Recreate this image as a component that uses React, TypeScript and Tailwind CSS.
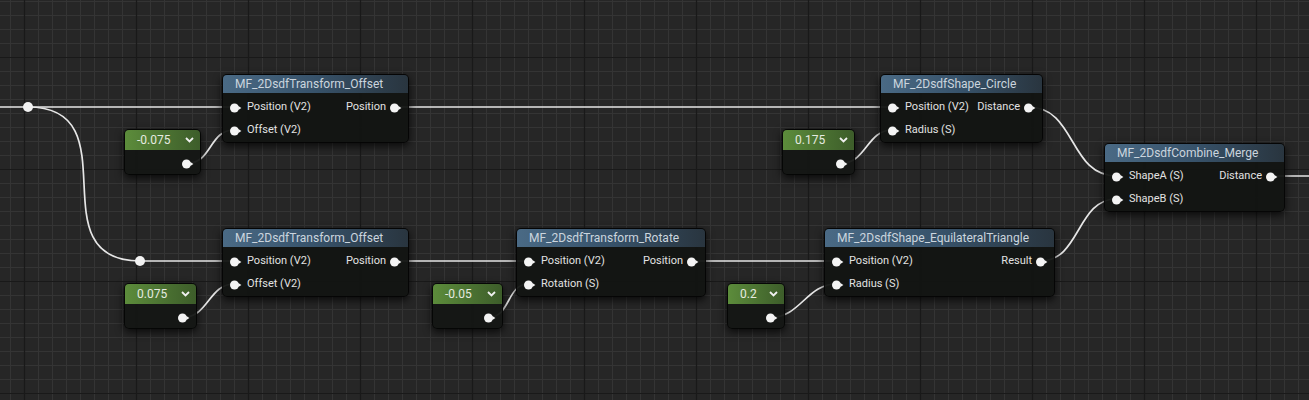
import React from 'react';

type Pt = { x: number; y: number };

interface GraphNode {
  id: string;
  title: string;
  x: number;
  y: number;
  w: number;
  pos: string;
  inputs: string[];
  outputs: string[];
}

interface ConstNode {
  id: string;
  value: string;
  x: number;
  y: number;
  w: number;
  pos: string;
}

// node geometry (numbers are used for the wires, pos classes for the boxes)
const nodes: GraphNode[] = [
  { id: 'off1', title: 'MF_2DsdfTransform_Offset', x: 222, y: 74, w: 187, pos: 'left-[222px] top-[74px] w-[187px]', inputs: ['Position (V2)', 'Offset (V2)'], outputs: ['Position'] },
  { id: 'circle', title: 'MF_2DsdfShape_Circle', x: 880, y: 74, w: 163, pos: 'left-[880px] top-[74px] w-[163px]', inputs: ['Position (V2)', 'Radius (S)'], outputs: ['Distance'] },
  { id: 'merge', title: 'MF_2DsdfCombine_Merge', x: 1104, y: 143, w: 181, pos: 'left-[1104px] top-[143px] w-[181px]', inputs: ['ShapeA (S)', 'ShapeB (S)'], outputs: ['Distance'] },
  { id: 'off2', title: 'MF_2DsdfTransform_Offset', x: 222, y: 228, w: 187, pos: 'left-[222px] top-[228px] w-[187px]', inputs: ['Position (V2)', 'Offset (V2)'], outputs: ['Position'] },
  { id: 'rot', title: 'MF_2DsdfTransform_Rotate', x: 516, y: 228, w: 190, pos: 'left-[516px] top-[228px] w-[190px]', inputs: ['Position (V2)', 'Rotation (S)'], outputs: ['Position'] },
  { id: 'tri', title: 'MF_2DsdfShape_EquilateralTriangle', x: 824, y: 228, w: 231, pos: 'left-[824px] top-[228px] w-[231px]', inputs: ['Position (V2)', 'Radius (S)'], outputs: ['Result'] },
];

const consts: ConstNode[] = [
  { id: 'c1', value: '-0.075', x: 124, y: 129, w: 77, pos: 'left-[124px] top-[129px] w-[77px]' },
  { id: 'c2', value: '0.175', x: 782, y: 129, w: 73, pos: 'left-[782px] top-[129px] w-[73px]' },
  { id: 'c3', value: '0.075', x: 124, y: 283, w: 73, pos: 'left-[124px] top-[283px] w-[73px]' },
  { id: 'c4', value: '-0.05', x: 432, y: 283, w: 71, pos: 'left-[432px] top-[283px] w-[71px]' },
  { id: 'c5', value: '0.2', x: 727, y: 283, w: 58, pos: 'left-[727px] top-[283px] w-[58px]' },
];

const byId = (id: string) => nodes.find((n) => n.id === id)!;
const cById = (id: string) => consts.find((c) => c.id === id)!;

const inPin = (id: string, i: number): Pt => {
  const n = byId(id);
  return { x: n.x + 12.5, y: n.y + 33 + 23 * i };
};
const outPin = (id: string, i: number): Pt => {
  const n = byId(id);
  return { x: n.x + n.w - 14.5, y: n.y + 33 + 23 * i };
};
const cPin = (id: string): Pt => {
  const c = cById(id);
  return { x: c.x + c.w - 14.5, y: c.y + 34.5 };
};

const bez = (a: Pt, b: Pt, d: number) =>
  `M${a.x} ${a.y} C${a.x + d} ${a.y} ${b.x - d} ${b.y} ${b.x} ${b.y}`;

const reroute1: Pt = { x: 28, y: 107 };
const reroute2: Pt = { x: 140, y: 261 };

const wires: string[] = [
  `M0 ${reroute1.y} L${inPin('off1', 0).x} ${inPin('off1', 0).y}`,
  bez(reroute1, reroute2, 105),
  `M${reroute2.x} ${reroute2.y} L${inPin('off2', 0).x} ${inPin('off2', 0).y}`,
  bez(cPin('c1'), inPin('off1', 1), 26),
  `M${outPin('off1', 0).x} ${outPin('off1', 0).y} L${inPin('circle', 0).x} ${inPin('circle', 0).y}`,
  bez(cPin('c2'), inPin('circle', 1), 26),
  bez(outPin('circle', 0), inPin('merge', 0), 48),
  bez(cPin('c3'), inPin('off2', 1), 26),
  `M${outPin('off2', 0).x} ${outPin('off2', 0).y} L${inPin('rot', 0).x} ${inPin('rot', 0).y}`,
  bez(cPin('c4'), inPin('rot', 1), 22),
  `M${outPin('rot', 0).x} ${outPin('rot', 0).y} L${inPin('tri', 0).x} ${inPin('tri', 0).y}`,
  bez(cPin('c5'), inPin('tri', 1), 30),
  bez(outPin('tri', 0), inPin('merge', 1), 40),
  `M${outPin('merge', 0).x} ${outPin('merge', 0).y} L1309 ${outPin('merge', 0).y}`,
];

const W = 1309;
const H = 400;
const minorX = Array.from({ length: 95 }, (_, k) => 10 + 14 * k).filter((v) => v < W);
const minorY = Array.from({ length: 30 }, (_, k) => 1 + 14 * k).filter((v) => v < H);
const majorX = [24, 136, 248, 360, 472, 584, 696, 808, 920, 1032, 1144, 1256];
const majorY = [57, 169, 281, 393];

const Pin = () => (
  <svg width="12" height="10" viewBox="0 0 12 10" className="shrink-0">
    <circle cx="4.5" cy="5" r="4.5" fill="#f4f4f4" />
    <path d="M8.4 3 L11.4 5 L8.4 7 Z" fill="#f4f4f4" />
  </svg>
);

const Chevron = () => (
  <svg width="9" height="6" viewBox="0 0 9 6" className="shrink-0">
    <path d="M1 1 L4.5 4.5 L8 1" fill="none" stroke="#f0f0f0" strokeWidth="1.8" />
  </svg>
);

const MaterialNode = ({ n }: { n: GraphNode }) => (
  <div
    className={`absolute ${n.pos} rounded-[5px] border border-black/70 bg-[#121412]/95 shadow-[0_3px_8px_rgba(0,0,0,0.75)] overflow-hidden`}
  >
    <div className="h-[18px] flex items-center pl-3 text-[12px] text-[#cbd5de] whitespace-nowrap bg-linear-to-r from-[#4a6a85] via-[#37526a] to-[#29353f]">
      {n.title}
    </div>
    <div className="flex justify-between pt-[3px] pb-0 text-[11px] text-[#e2e2e2] whitespace-nowrap">
      <div className="flex flex-col">
        {n.inputs.map((label) => (
          <div key={label} className="h-[23px] flex items-center gap-[5px] pl-[7px]">
            <Pin />
            <span>{label}</span>
          </div>
        ))}
      </div>
      <div className="flex flex-col">
        {n.outputs.map((label) => (
          <div key={label} className="h-[23px] flex items-center justify-end gap-[4px] pr-[6px]">
            <span>{label}</span>
            <Pin />
          </div>
        ))}
      </div>
    </div>
  </div>
);

const ConstantNode = ({ c }: { c: ConstNode }) => (
  <div
    className={`absolute ${c.pos} h-[46px] rounded-[5px] border border-black/70 bg-[#141614]/95 shadow-[0_3px_8px_rgba(0,0,0,0.75)] overflow-hidden`}
  >
    <div className="h-[20px] flex items-center justify-between pl-3 pr-[6px] text-[12px] text-[#e6ebe0] bg-linear-to-r from-[#5c8c3b] to-[#3d5d2a]">
      <span>{c.value}</span>
      <Chevron />
    </div>
    <div className="h-[24px] flex items-center justify-end pr-[6px] pt-[3px]">
      <Pin />
    </div>
  </div>
);

export default function App() {
  return (
    <div className="relative w-[1309px] h-[400px] overflow-hidden bg-[#262626] font-[Roboto,'Liberation_Sans',sans-serif]">
      <svg className="absolute inset-0" width={W} height={H}>
        {minorX.map((x) => (
          <line key={`mx${x}`} x1={x + 0.5} y1={0} x2={x + 0.5} y2={H} stroke="#343434" strokeWidth="1" />
        ))}
        {minorY.map((y) => (
          <line key={`my${y}`} x1={0} y1={y + 0.5} x2={W} y2={y + 0.5} stroke="#343434" strokeWidth="1" />
        ))}
        {majorX.map((x) => (
          <line key={`Mx${x}`} x1={x + 0.5} y1={0} x2={x + 0.5} y2={H} stroke="#191919" strokeWidth="1.2" />
        ))}
        {majorY.map((y) => (
          <line key={`My${y}`} x1={0} y1={y + 0.5} x2={W} y2={y + 0.5} stroke="#191919" strokeWidth="1.2" />
        ))}
        {wires.map((d, i) => (
          <path key={i} d={d} fill="none" stroke="#e6e6e6" strokeWidth="1.7" />
        ))}
        <circle cx={reroute1.x} cy={reroute1.y} r="5" fill="#f2f2f2" />
        <circle cx={reroute2.x} cy={reroute2.y} r="5" fill="#f2f2f2" />
      </svg>

      {consts.map((c) => (
        <ConstantNode key={c.id} c={c} />
      ))}
      {nodes.map((n) => (
        <MaterialNode key={n.id} n={n} />
      ))}
    </div>
  );
}
